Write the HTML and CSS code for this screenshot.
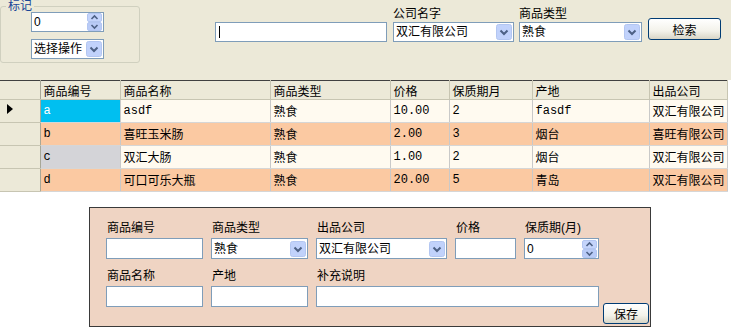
FILE: index.html
```html
<!DOCTYPE html>
<html>
<head>
    <title>商品管理</title>
    <link rel="stylesheet" href="styles.css">
</head>
<body>
    <div class="toolbar">
        <fieldset class="mark">
            <legend>标记</legend>
            <div class="mark-body">
                <div class="spin">
                    <span class="val">0</span>
                    <span class="spin-btn">
                        <svg width="15" height="18" viewBox="0 0 15 18">
                            <rect x="0.5" y="0.5" width="14" height="8" rx="1.5" fill="#c4d4fb" stroke="#b3c6f1"/>
                            <rect x="0.5" y="9.5" width="14" height="8" rx="1.5" fill="#b9cbf7" stroke="#b3c6f1"/>
                            <path d="M4.5 6 L7.5 3 L10.5 6" fill="none" stroke="#4d6185" stroke-width="1.6"/>
                            <path d="M4.5 12 L7.5 15 L10.5 12" fill="none" stroke="#4d6185" stroke-width="1.6"/>
                        </svg>
                    </span>
                </div>
                <div class="combo">
                    <span class="val">选择操作</span>
                    <span class="drop">
                        <svg width="16" height="16" viewBox="0 0 16 16">
                            <rect x="0.5" y="0.5" width="15" height="15" rx="2" fill="#c1d2fb" stroke="#b3c6f1"/>
                            <path d="M4.5 6.5 L8 10 L11.5 6.5" fill="none" stroke="#4d6185" stroke-width="2"/>
                        </svg>
                    </span>
                </div>
            </div>
        </fieldset>

        <div class="text-box search"><span class="caret"></span></div>

        <div class="field company">
            <label>公司名字</label>
            <div class="combo">
                <span class="val">双汇有限公司</span>
                <span class="drop">
                    <svg width="16" height="16" viewBox="0 0 16 16">
                        <rect x="0.5" y="0.5" width="15" height="15" rx="2" fill="#c1d2fb" stroke="#b3c6f1"/>
                        <path d="M4.5 6.5 L8 10 L11.5 6.5" fill="none" stroke="#4d6185" stroke-width="2"/>
                    </svg>
                </span>
            </div>
        </div>

        <div class="field kind">
            <label>商品类型</label>
            <div class="combo">
                <span class="val">熟食</span>
                <span class="drop">
                    <svg width="16" height="16" viewBox="0 0 16 16">
                        <rect x="0.5" y="0.5" width="15" height="15" rx="2" fill="#c1d2fb" stroke="#b3c6f1"/>
                        <path d="M4.5 6.5 L8 10 L11.5 6.5" fill="none" stroke="#4d6185" stroke-width="2"/>
                    </svg>
                </span>
            </div>
        </div>

        <button class="xp-btn search-btn">检索</button>
    </div>

    <table class="grid">
        <colgroup>
            <col style="width:40px">
            <col style="width:80px">
            <col style="width:150px">
            <col style="width:120px">
            <col style="width:59px">
            <col style="width:83px">
            <col style="width:117px">
            <col style="width:78px">
        </colgroup>
        <thead>
            <tr>
                <th class="row-head"></th>
                <th>商品编号</th>
                <th>商品名称</th>
                <th>商品类型</th>
                <th>价格</th>
                <th>保质期月</th>
                <th>产地</th>
                <th>出品公司</th>
            </tr>
        </thead>
        <tbody>
            <tr class="light">
                <td class="row-head">
                    <svg width="6" height="10" viewBox="0 0 6 10"><polygon points="0,0 6,5 0,10" fill="#000"/></svg>
                </td>
                <td class="selected">a</td>
                <td>asdf</td>
                <td>熟食</td>
                <td>10.00</td>
                <td>2</td>
                <td>fasdf</td>
                <td>双汇有限公司</td>
            </tr>
            <tr class="peach">
                <td class="row-head"></td>
                <td>b</td>
                <td>喜旺玉米肠</td>
                <td>熟食</td>
                <td>2.00</td>
                <td>3</td>
                <td>烟台</td>
                <td>喜旺有限公司</td>
            </tr>
            <tr class="light">
                <td class="row-head"></td>
                <td class="grey">c</td>
                <td>双汇大肠</td>
                <td>熟食</td>
                <td>1.00</td>
                <td>2</td>
                <td>烟台</td>
                <td>双汇有限公司</td>
            </tr>
            <tr class="peach">
                <td class="row-head"></td>
                <td>d</td>
                <td>可口可乐大瓶</td>
                <td>熟食</td>
                <td>20.00</td>
                <td>5</td>
                <td>青岛</td>
                <td>双汇有限公司</td>
            </tr>
        </tbody>
    </table>

    <div class="editor">
        <div class="form-row">
            <div class="fld w97">
                <label>商品编号</label>
                <div class="text-box"></div>
            </div>
            <div class="fld w97">
                <label>商品类型</label>
                <div class="combo">
                    <span class="val">熟食</span>
                    <span class="drop">
                        <svg width="16" height="16" viewBox="0 0 16 16">
                            <rect x="0.5" y="0.5" width="15" height="15" rx="2" fill="#c1d2fb" stroke="#b3c6f1"/>
                            <path d="M4.5 6.5 L8 10 L11.5 6.5" fill="none" stroke="#4d6185" stroke-width="2"/>
                        </svg>
                    </span>
                </div>
            </div>
            <div class="fld w131">
                <label>出品公司</label>
                <div class="combo">
                    <span class="val">双汇有限公司</span>
                    <span class="drop">
                        <svg width="16" height="16" viewBox="0 0 16 16">
                            <rect x="0.5" y="0.5" width="15" height="15" rx="2" fill="#c1d2fb" stroke="#b3c6f1"/>
                            <path d="M4.5 6.5 L8 10 L11.5 6.5" fill="none" stroke="#4d6185" stroke-width="2"/>
                        </svg>
                    </span>
                </div>
            </div>
            <div class="fld w61">
                <label>价格</label>
                <div class="text-box"></div>
            </div>
            <div class="fld w75">
                <label>保质期(月)</label>
                <div class="spin">
                    <span class="val">0</span>
                    <span class="spin-btn">
                        <svg width="15" height="18" viewBox="0 0 15 18">
                            <rect x="0.5" y="0.5" width="14" height="8" rx="1.5" fill="#c4d4fb" stroke="#b3c6f1"/>
                            <rect x="0.5" y="9.5" width="14" height="8" rx="1.5" fill="#b9cbf7" stroke="#b3c6f1"/>
                            <path d="M4.5 6 L7.5 3 L10.5 6" fill="none" stroke="#4d6185" stroke-width="1.6"/>
                            <path d="M4.5 12 L7.5 15 L10.5 12" fill="none" stroke="#4d6185" stroke-width="1.6"/>
                        </svg>
                    </span>
                </div>
            </div>
        </div>
        <div class="form-row second">
            <div class="fld w97">
                <label>商品名称</label>
                <div class="text-box"></div>
            </div>
            <div class="fld w97">
                <label>产地</label>
                <div class="text-box"></div>
            </div>
            <div class="fld w283">
                <label>补充说明</label>
                <div class="text-box"></div>
            </div>
            <button class="xp-btn save-btn">保存</button>
        </div>
    </div>
</body>
</html>
```

FILE: styles.css
```css
body {
    margin: 0;
    width: 731px;
    height: 331px;
    overflow: hidden;
    background: #fff;
    font-family: "Liberation Sans", "Noto Sans CJK SC", sans-serif;
    font-size: 12px;
    color: #000;
}

/* top search bar */
.toolbar {
    display: flex;
    align-items: flex-start;
    height: 80px;
    background: #ece9d8;
}

.mark {
    margin: 0;
    padding: 0;
    width: 140px;
    box-sizing: border-box;
    border: 1px solid #d0d0bf;
    border-radius: 3px;
}

.mark legend {
    margin-left: 5px;
    padding: 0 2px;
    line-height: 12px;
    color: #1a4597;
}

.mark-body {
    display: flex;
    flex-direction: column;
    gap: 7px;
    padding: 0 0 3px 30px;
}

.mark .spin,
.mark .combo {
    width: 73px;
}

.text-box,
.combo,
.spin {
    height: 20px;
    box-sizing: border-box;
    border: 1px solid #7f9db9;
    background: #fff;
}

.combo,
.spin {
    display: flex;
    align-items: center;
}

.combo .val,
.spin .val {
    flex: 1;
    padding-left: 2px;
    white-space: nowrap;
    overflow: hidden;
    line-height: 18px;
}

.drop,
.spin-btn {
    display: flex;
    margin-right: 1px;
}

.search {
    width: 172px;
    margin: 22px 0 0 75px;
    padding: 3px 0 0 3px;
}

.caret {
    display: block;
    width: 1px;
    height: 12px;
    background: #000;
}

.field label {
    display: block;
    padding-top: 6px;
    line-height: 16px;
}

.company {
    width: 121px;
    margin-left: 6px;
}

.kind {
    width: 123px;
    margin-left: 5px;
}

.xp-btn {
    height: 22px;
    padding: 0;
    border: 1px solid #003c74;
    border-radius: 3px;
    background: linear-gradient(#ffffff, #f3f2ea 60%, #d8d5c6);
    font-family: "Liberation Sans", "Noto Sans CJK SC", sans-serif;
    font-size: 12px;
    color: #000;
}

.search-btn {
    width: 73px;
    margin: 18px 0 0 6px;
}

/* data grid */
.grid {
    width: 727px;
    table-layout: fixed;
    border-collapse: collapse;
    border-top: 1px solid #404040;
    font-family: "Liberation Mono", "Noto Sans CJK SC", monospace;
    font-size: 12px;
}

.grid th {
    height: 18px;
    padding: 0 3px;
    background: #ece9d8;
    border-right: 1px solid #c7c5b2;
    border-bottom: 1px solid #c7c5b2;
    font-family: "Liberation Sans", "Noto Sans CJK SC", sans-serif;
    font-weight: normal;
    text-align: left;
    white-space: nowrap;
    overflow: hidden;
}

.grid td {
    height: 22px;
    padding: 0 3px;
    border-right: 1px solid #c9c9c9;
    border-bottom: 1px solid #d6d6d6;
    white-space: nowrap;
    overflow: hidden;
}

.grid tr.light td {
    background: #fffaf0;
}

.grid tr.peach td {
    background: #fbc9a2;
}

.grid tr td.row-head,
.grid th.row-head {
    background: #ece9d8;
    border-right: 1px solid #a8a797;
    border-bottom: 1px solid #c7c5b2;
    padding-left: 7px;
}

.grid tr td.selected {
    background: #00bff0;
    color: #fff;
}

.grid tr td.grey {
    background: #d4d4d8;
}

/* editor panel */
.editor {
    width: 562px;
    height: 120px;
    box-sizing: border-box;
    margin: 15px 0 0 89px;
    padding: 13px 0 0 16px;
    border: 1px solid #3a3a3a;
    background: #efd4c3;
}

.form-row {
    display: flex;
    align-items: flex-start;
    gap: 8px;
}

.form-row.second {
    margin-top: 10px;
}

.fld label {
    display: block;
    line-height: 14px;
    margin: 0 0 3px 1px;
    white-space: nowrap;
}

.fld .text-box,
.fld .combo,
.fld .spin {
    height: 21px;
}

.w97 { width: 97px; }
.w131 { width: 131px; }
.w61 { width: 61px; }
.w75 { width: 75px; }
.w283 { width: 283px; }

.save-btn {
    width: 46px;
    height: 21px;
    margin: 34px 0 0 -4px;
}
```
